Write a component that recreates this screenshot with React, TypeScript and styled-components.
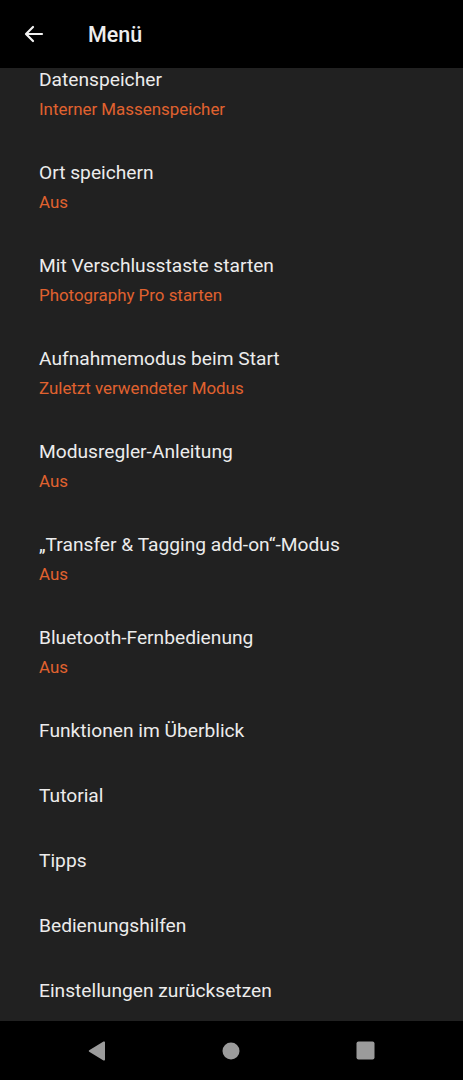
import React from 'react'
import styled, { createGlobalStyle } from 'styled-components'

const GlobalStyle = createGlobalStyle`
    html, body {
        margin: 0;
        padding: 0;
        background: #212121;
    }
    body {
        font-family: Roboto, "Noto Sans", "Liberation Sans", sans-serif;
    }
`

type Entry = { title: string; value?: string }

const entries: Entry[] = [
    { title: 'Datenspeicher', value: 'Interner Massenspeicher' },
    { title: 'Ort speichern', value: 'Aus' },
    { title: 'Mit Verschlusstaste starten', value: 'Photography Pro starten' },
    { title: 'Aufnahmemodus beim Start', value: 'Zuletzt verwendeter Modus' },
    { title: 'Modusregler-Anleitung', value: 'Aus' },
    { title: '„Transfer & Tagging add-on“-Modus', value: 'Aus' },
    { title: 'Bluetooth-Fernbedienung', value: 'Aus' },
    { title: 'Funktionen im Überblick' },
    { title: 'Tutorial' },
    { title: 'Tipps' },
    { title: 'Bedienungshilfen' },
    { title: 'Einstellungen zurücksetzen' },
]

const App = () => {
    return (
        <Screen>
            <GlobalStyle />
            <Header>
                <BackButton aria-label="Zurück">
                    <svg width="24" height="24" viewBox="0 0 24 24" fill="none">
                        <path d="M20 12H4.5M11 5l-7 7 7 7" stroke="#f2f2f2" strokeWidth="2.2" strokeLinecap="round" strokeLinejoin="round" />
                    </svg>
                </BackButton>
                <Title>Menü</Title>
            </Header>
            <Content>
                <List>
                    {entries.map((e) => (
                        <Item key={e.title}>
                            <ItemTitle>{e.title}</ItemTitle>
                            {e.value && <ItemValue>{e.value}</ItemValue>}
                        </Item>
                    ))}
                </List>
            </Content>
            <NavBar>
                <svg width="18" height="20" viewBox="0 0 18 20">
                    <path d="M17 1.5v17a1 1 0 0 1-1.5.9L1.2 10.8a1 1 0 0 1 0-1.6L15.5.6A1 1 0 0 1 17 1.5z" fill="#9b9b9b" />
                </svg>
                <svg width="18" height="18" viewBox="0 0 18 18">
                    <circle cx="9" cy="9" r="8.5" fill="#9b9b9b" />
                </svg>
                <svg width="19" height="19" viewBox="0 0 19 19">
                    <rect x="0.5" y="0.5" width="18" height="18" rx="2" fill="#9b9b9b" />
                </svg>
            </NavBar>
        </Screen>
    )
}

export default App

const Screen = styled.div`
    width: 463px;
    height: 1080px;
    display: flex;
    flex-direction: column;
    background: #212121;
    overflow: hidden;
`

const Header = styled.div`
    height: 68px;
    flex-shrink: 0;
    background: #000;
    display: flex;
    align-items: center;
    position: relative;
    z-index: 1;
`

const BackButton = styled.div`
    width: 24px;
    height: 24px;
    margin-left: 22px;
    display: flex;
`

const Title = styled.div`
    margin-left: 42px;
    font-size: 21.5px;
    font-weight: 500;
    color: #ededed;
    margin-top: 1px;
`

const Content = styled.div`
    flex: 1;
    overflow: hidden;
`

const List = styled.div`
    margin-top: -21px;
`

const Item = styled.div`
    padding: 21px 39px 20px;
    display: flex;
    flex-direction: column;
`

const ItemTitle = styled.div`
    font-size: 19.2px;
    line-height: 24px;
    color: #ececec;
`

const ItemValue = styled.div`
    margin-top: 7px;
    font-size: 16.9px;
    line-height: 21px;
    color: #e0622f;
`

const NavBar = styled.div`
    height: 59px;
    flex-shrink: 0;
    background: #000;
    display: flex;
    justify-content: center;
    align-items: center;
    gap: 116px;
`
